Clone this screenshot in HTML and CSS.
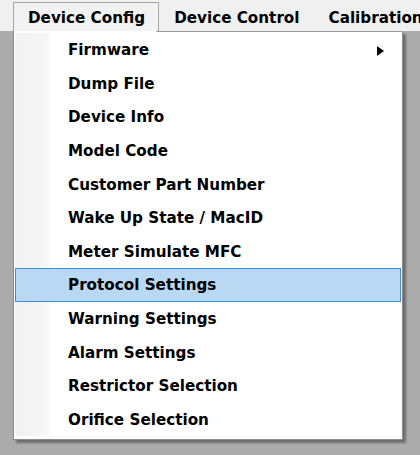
FILE: index.html
```html
<!DOCTYPE html>
<html>
<head>
<meta charset="utf-8">
<link rel="stylesheet" href="styles.css">
</head>
<body>
<div class="screen">
  <nav class="menubar">
    <div class="menubar-item active">Device Config</div>
    <div class="menubar-item">Device Control</div>
    <div class="menubar-item">Calibration</div>
  </nav>
  <div class="popup">
    <ul class="menu-list">
      <li class="menu-item"><span>Firmware</span><span class="submenu-arrow"></span></li>
      <li class="menu-item"><span>Dump File</span></li>
      <li class="menu-item"><span>Device Info</span></li>
      <li class="menu-item"><span>Model Code</span></li>
      <li class="menu-item"><span>Customer Part Number</span></li>
      <li class="menu-item"><span>Wake Up State / MacID</span></li>
      <li class="menu-item"><span>Meter Simulate MFC</span></li>
      <li class="menu-item selected"><span>Protocol Settings</span></li>
      <li class="menu-item"><span>Warning Settings</span></li>
      <li class="menu-item"><span>Alarm Settings</span></li>
      <li class="menu-item"><span>Restrictor Selection</span></li>
      <li class="menu-item"><span>Orifice Selection</span></li>
    </ul>
  </div>
</div>
</body>
</html>
```
FILE: styles.css
```css
html, body {
  margin: 0;
  padding: 0;
}
body {
  width: 420px;
  height: 455px;
  overflow: hidden;
  background: #ababab;
  font-family: "DejaVu Sans", Verdana, sans-serif;
  font-weight: bold;
  font-size: 15.2px;
  color: #000;
}
.screen {
  position: relative;
  width: 420px;
  height: 455px;
}
.menubar {
  display: flex;
  height: 31px;
  background: #f0f0f0;
  padding-left: 13px;
  box-sizing: border-box;
  white-space: nowrap;
}
.menubar-item {
  margin-top: 2px;
  height: 29px;
  line-height: 29px;
  padding: 1px 13px 0 14px;
  border: 1px solid transparent;
  border-bottom: none;
  box-sizing: border-box;
}
.menubar-item.active {
  border-color: #a3a3a3;
  background: #f2f2f2;
}
.popup {
  position: absolute;
  left: 13px;
  top: 31px;
  width: 390px;
  height: 409px;
  box-sizing: border-box;
  background: #fff;
  border: 1px solid #8c8c8c;
  border-top: none;
  box-shadow: 3px 3px 2px rgba(0, 0, 0, 0.36);
}
.popup::before {
  content: "";
  position: absolute;
  top: 0;
  left: 142px;
  right: -1px;
  height: 1px;
  background: #9a9a9a;
}
.menu-list {
  list-style: none;
  margin: 2px 0 0;
  padding: 0;
  background: linear-gradient(to right, #fff 0, #fff 1px, #f1f1f1 2px, #f7f7f7 35px, #fff 36px);
  height: 403px;
}
.menu-item {
  display: flex;
  align-items: center;
  height: 33.58px;
  line-height: 31px;
  padding: 2px 16px 0 53px;
  margin: 0 1px;
  box-sizing: border-box;
  border: 1px solid transparent;
  white-space: nowrap;
}
.menu-item span:first-child {
  margin-left: -1px;
}
.menu-item.selected {
  background: #b9d8f3;
  border-color: #3a8de0;
}
.submenu-arrow {
  margin-left: auto;
  width: 0;
  height: 0;
  border-left: 7px solid #000;
  border-top: 5px solid transparent;
  border-bottom: 5px solid transparent;
  margin-top: 0;
}
```
